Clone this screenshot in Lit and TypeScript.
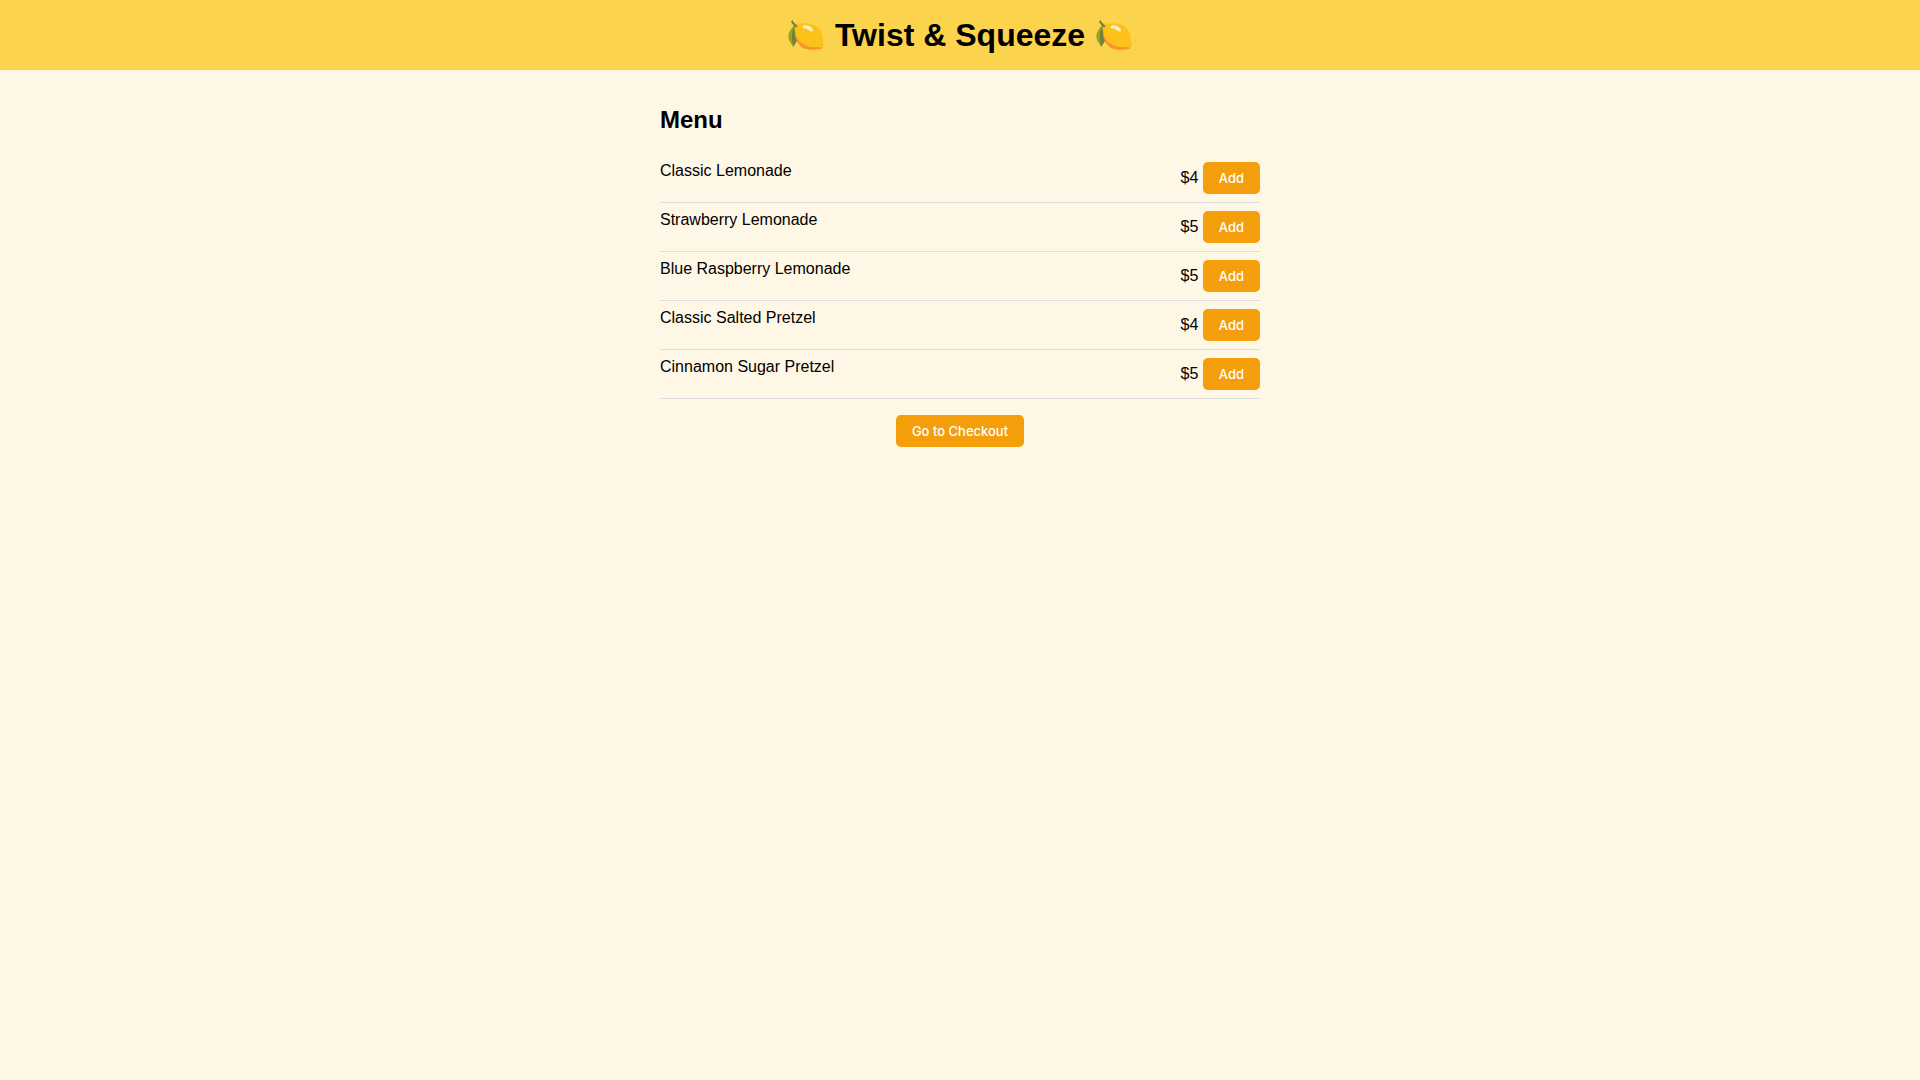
import { LitElement, html, css } from "lit";
import { customElement, property } from "lit/decorators.js";

interface MenuEntry {
  name: string;
  price: number;
}

@customElement("app-root")
export class AppRoot extends LitElement {
  @property({ attribute: false })
  items: MenuEntry[] = [
    { name: "Classic Lemonade", price: 4 },
    { name: "Strawberry Lemonade", price: 5 },
    { name: "Blue Raspberry Lemonade", price: 5 },
    { name: "Classic Salted Pretzel", price: 4 },
    { name: "Cinnamon Sugar Pretzel", price: 5 },
  ];

  static styles = css`
    :host {
      display: block;
      min-height: 100vh;
      background: #fff7e6;
      color: #000;
      font-family: "Liberation Sans", Arial, sans-serif;
      font-size: 16px;
    }
    .header {
      padding: 16px;
      background: #fcd34d;
      text-align: center;
    }
    .title {
      margin: 0;
      font-size: 32px;
      line-height: 38px;
    }
    .main {
      max-width: 600px;
      margin: 0 auto;
      padding: 16px;
    }
    .heading {
      margin: 20px 0;
      font-size: 24px;
      line-height: 28px;
    }
    .list {
      margin: 0;
      padding: 0;
      list-style: none;
    }
    .item {
      display: flex;
      justify-content: space-between;
      padding: 8px 0;
      border-bottom: 1px solid #ddd;
    }
    .button {
      padding: 8px 16px;
      border: none;
      border-radius: 5px;
      background: #f59e0b;
      color: #fff;
      font-family: Inter, sans-serif;
      font-size: 13px;
      line-height: 16px;
      font-weight: 500;
      cursor: pointer;
    }
    .actions {
      margin-top: 16px;
      text-align: center;
    }
  `;

  render() {
    return html`
      <header class="header">
        <h1 class="title">🍋 Twist &amp; Squeeze 🍋</h1>
      </header>
      <main class="main">
        <h2 class="heading">Menu</h2>
        <ul class="list">
          ${this.items.map(
            (item) => html`
              <li class="item">
                <span>${item.name}</span>
                <span>
                  $${item.price}
                  <button class="button" type="button" aria-label="Add ${item.name}">Add</button>
                </span>
              </li>
            `
          )}
        </ul>
        <div class="actions">
          <button class="button" type="button">Go to Checkout</button>
        </div>
      </main>
    `;
  }
}
